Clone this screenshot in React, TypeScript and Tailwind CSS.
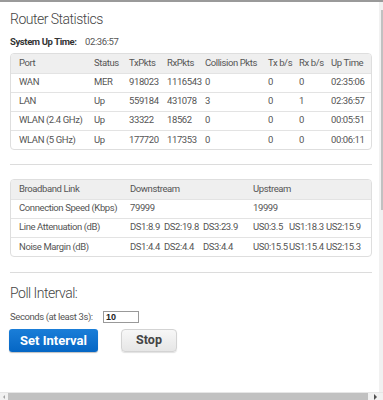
import React from "react";

const ports = [
  { port: "WAN", status: "MER", tx: "918023", rx: "1116543", col: "0", txb: "0", rxb: "0", up: "02:35:06" },
  { port: "LAN", status: "Up", tx: "559184", rx: "431078", col: "3", txb: "0", rxb: "1", up: "02:36:57" },
  { port: "WLAN (2.4 GHz)", status: "Up", tx: "33322", rx: "18562", col: "0", txb: "0", rxb: "0", up: "00:05:51" },
  { port: "WLAN (5 GHz)", status: "Up", tx: "177720", rx: "117353", col: "0", txb: "0", rxb: "0", up: "00:06:11" },
];

const cell = "h-[19px] pl-[8px] text-left font-normal whitespace-nowrap";
const small = "text-[9.5px] tracking-[-0.4px]";

function Triple({ values, widths }: { values: string[]; widths: string[] }) {
  return (
    <span className="flex">
      {values.map((v, i) => (
        <span key={v} className={widths[i]}>
          {v}
        </span>
      ))}
    </span>
  );
}

export default function App() {
  const font = { fontFamily: "Roboto, 'Noto Sans', sans-serif" };
  return (
    <div className="w-[383px] h-[400px] flex flex-col bg-white overflow-hidden text-[#555]" style={font}>
      <div className="h-[2px] bg-[#9a9a9a]" />
      <div className="flex flex-1 min-h-0">
        <div className="flex-1 pl-[10px] pr-[7px]">
          <h1 className="mt-[8px] h-[18px] leading-[18px] text-[14px] font-light text-[#444] tracking-[-0.5px]">
            Router Statistics
          </h1>
          <div className={`mt-[7px] flex h-[14px] items-center whitespace-nowrap ${small}`}>
            <span className="w-[75px] font-bold text-[#333]">System Up Time:</span>
            <span>02:36:57</span>
          </div>

          <div className="mt-[4px] rounded-[4px] border border-[#dedede] overflow-hidden">
            <table className={`w-full border-collapse table-fixed ${small}`}>
              <colgroup>
                <col className="w-[75px]" />
                <col className="w-[35px]" />
                <col className="w-[38px]" />
                <col className="w-[38px]" />
                <col className="w-[63px]" />
                <col className="w-[31px]" />
                <col className="w-[32px]" />
                <col />
              </colgroup>
              <thead>
                <tr className="bg-[#efefef]">
                  {["Port", "Status", "TxPkts", "RxPkts", "Collision Pkts", "Tx b/s", "Rx b/s", "Up Time"].map((h) => (
                    <th key={h} className={cell}>
                      {h}
                    </th>
                  ))}
                </tr>
              </thead>
              <tbody>
                {ports.map((p) => (
                  <tr key={p.port} className="border-t border-[#e3e3e3]">
                    <td className={cell}>{p.port}</td>
                    <td className={cell}>{p.status}</td>
                    <td className={cell}>{p.tx}</td>
                    <td className={cell}>{p.rx}</td>
                    <td className={cell}>{p.col}</td>
                    <td className={cell}>{p.txb}</td>
                    <td className={cell}>{p.rxb}</td>
                    <td className={cell}>{p.up}</td>
                  </tr>
                ))}
              </tbody>
            </table>
          </div>

          <div className="mt-[14px] h-px bg-[#dcdcdc]" />

          <div className="mt-[14px] rounded-[4px] border border-[#dedede] overflow-hidden">
            <table className={`w-full border-collapse table-fixed ${small}`}>
              <colgroup>
                <col className="w-[111px]" />
                <col className="w-[123px]" />
                <col />
              </colgroup>
              <thead>
                <tr className="bg-[#efefef]">
                  <th className={cell}>Broadband Link</th>
                  <th className={cell}>Downstream</th>
                  <th className={cell}>Upstream</th>
                </tr>
              </thead>
              <tbody>
                <tr className="border-t border-[#e3e3e3]">
                  <td className={cell}>Connection Speed (Kbps)</td>
                  <td className={cell}>79999</td>
                  <td className={cell}>19999</td>
                </tr>
                <tr className="border-t border-[#e3e3e3]">
                  <td className={cell}>Line Attenuation (dB)</td>
                  <td className={cell}>
                    <Triple values={["DS1:8.9", "DS2:19.8", "DS3:23.9"]} widths={["w-[34px]", "w-[39px]", ""]} />
                  </td>
                  <td className={cell}>
                    <Triple values={["US0:3.5", "US1:18.3", "US2:15.9"]} widths={["w-[36px]", "w-[37px]", ""]} />
                  </td>
                </tr>
                <tr className="border-t border-[#e3e3e3]">
                  <td className={cell}>Noise Margin (dB)</td>
                  <td className={cell}>
                    <Triple values={["DS1:4.4", "DS2:4.4", "DS3:4.4"]} widths={["w-[34px]", "w-[39px]", ""]} />
                  </td>
                  <td className={cell}>
                    <Triple values={["US0:15.5", "US1:15.4", "US2:15.3"]} widths={["w-[36px]", "w-[37px]", ""]} />
                  </td>
                </tr>
              </tbody>
            </table>
          </div>

          <div className="mt-[15px] h-px bg-[#dcdcdc]" />

          <h2 className="mt-[11px] h-[18px] leading-[18px] text-[14px] font-light text-[#444] tracking-[-0.5px]">
            Poll Interval:
          </h2>
          <div className={`mt-[8px] flex h-[14px] items-center whitespace-nowrap ${small}`}>
            <span className="w-[93px]">Seconds (at least 3s):</span>
            <input
              defaultValue="10"
              className="w-[36px] h-[12px] border border-[#999] px-[2px] text-[9px] font-bold text-[#222] leading-[10px] outline-none tracking-normal"
              style={{ fontFamily: "'Liberation Sans', Arial, sans-serif" }}
            />
          </div>
          <div className="mt-[5px] flex gap-[23px] -ml-[1px]">
            <button
              type="button"
              className="w-[89px] h-[23px] rounded-[3px] bg-gradient-to-b from-[#1a7ed8] to-[#0566c4] text-white text-[13px] font-bold shadow-[0_1px_1px_rgba(0,0,0,0.25)]"
            >
              Set Interval
            </button>
            <button
              type="button"
              className="w-[56px] h-[23px] rounded-[4px] border border-[#d3d3d3] bg-gradient-to-b from-[#f7f7f7] to-[#e6e6e6] text-[#444] text-[12.5px] font-bold shadow-[0_1px_1px_rgba(0,0,0,0.12)]"
            >
              Stop
            </button>
          </div>
        </div>
        <div className="w-[4px] bg-[#f1f1f1] flex justify-end pt-[8px]">
          <div className="w-[2px] h-[200px] bg-[#c1c1c1]" />
        </div>
      </div>
      <div className="h-[8px] flex bg-[#f1f1f1] border-t border-[#e6e6e6]">
        <div className="w-[8px] flex items-center justify-center">
          <span className="block w-0 h-0 border-y-[2px] border-y-transparent border-r-[2px] border-r-[#a3a3a3]" />
        </div>
        <div className="w-[360px] bg-[#c1c1c1]" />
        <div className="flex-1 flex items-center justify-center">
          <span className="block w-0 h-0 border-y-[3px] border-y-transparent border-l-[3px] border-l-[#505050]" />
        </div>
      </div>
    </div>
  );
}
